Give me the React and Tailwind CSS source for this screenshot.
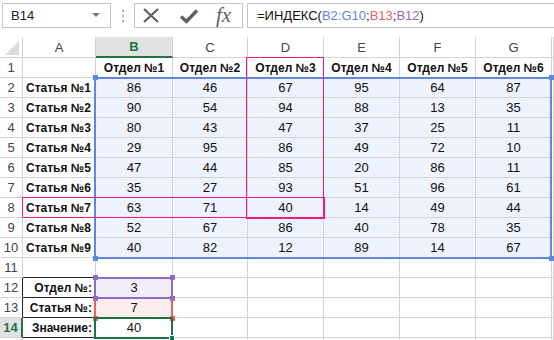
import React from "react";

const data = [
  ["86", "46", "67", "95", "64", "87"],
  ["90", "54", "94", "88", "13", "35"],
  ["80", "43", "47", "37", "25", "11"],
  ["29", "95", "86", "49", "72", "10"],
  ["47", "44", "85", "20", "86", "11"],
  ["35", "27", "93", "51", "96", "61"],
  ["63", "71", "40", "14", "49", "44"],
  ["52", "67", "86", "40", "78", "35"],
  ["40", "82", "12", "89", "14", "67"],
];

const cols = ["A", "B", "C", "D", "E", "F", "G"];
const G = "border-r border-b border-[#d4d4d4]";

function Sq({ cls }) {
  return <div className={"absolute w-[5px] h-[5px] " + cls} />;
}

export default function App() {
  const rows = [];
  rows.push(
    <div key="corner" className={"h-[21px] relative " + G}>
      <svg width="22" height="20" className="absolute left-0 top-0">
        <polygon points="5,18 19,18 19,4" fill="#dadada" />
      </svg>
    </div>
  );
  cols.forEach((c) => {
    if (c === "B") {
      rows.push(
        <div
          key={"h" + c}
          className="h-[21px] flex items-center justify-center bg-[#e1e1e1] border-r border-[#d4d4d4] border-b-2 border-b-[#217346] text-[#217346] font-bold"
        >
          {c}
        </div>
      );
    } else {
      rows.push(
        <div key={"h" + c} className={"h-[21px] flex items-center justify-center text-[#444] " + G}>
          {c}
        </div>
      );
    }
  });
  rows.push(<div key="hx" className={"h-[21px] " + G} />);

  for (let r = 1; r <= 15; r++) {
    if (r === 14) {
      rows.push(
        <div
          key={"r" + r}
          className="h-[20px] flex items-center justify-center bg-[#e1e1e1] text-[#217346] font-bold border-b border-[#d4d4d4] border-r-2 border-r-[#217346]"
        >
          {r}
        </div>
      );
    } else if (r === 12 || r === 13) {
      rows.push(
        <div key={"r" + r} className="h-[20px] flex items-center justify-center text-[#444] border-b border-[#d4d4d4] border-r border-r-[#222]">
          {r}
        </div>
      );
    } else {
      rows.push(
        <div key={"r" + r} className={"h-[20px] flex items-center justify-center text-[#444] " + G}>
          {r === 15 ? "" : r}
        </div>
      );
    }
    let aText = "";
    let aAlign = "justify-start pl-[3px]";
    let aBorder = G;
    if (r >= 2 && r <= 10) aText = "Статья №" + (r - 1);
    if (r === 11) aBorder = "border-r border-[#d4d4d4] border-b border-b-[#222]";
    if (r >= 12 && r <= 14) {
      aText = r === 12 ? "Отдел №:" : r === 13 ? "Статья №:" : "Значение:";
      aAlign = "justify-end pr-[3px]";
      aBorder = "border-r border-b border-[#222]";
    }
    rows.push(
      <div key={"a" + r} className={"h-[20px] flex items-center font-bold text-[12px] text-[#111] whitespace-nowrap overflow-hidden " + aAlign + " " + aBorder}>
        {aText}
      </div>
    );
    for (let c = 0; c < 6; c++) {
      let txt = "";
      let bg = "";
      let bold = "";
      if (r === 1) {
        txt = "Отдел №" + (c + 1);
        bold = "font-bold text-[12px]";
      } else if (r >= 2 && r <= 10) {
        txt = data[r - 2][c];
        bg = "bg-[#eef2fc]";
      } else if (c === 0 && r === 12) {
        txt = "3";
        bg = "bg-[#f1eefa]";
      } else if (c === 0 && r === 13) {
        txt = "7";
        bg = "bg-[#fdeeee]";
      } else if (c === 0 && r === 14) {
        txt = "40";
      }
      rows.push(
        <div
          key={"c" + r + "-" + c}
          className={"h-[20px] flex items-center justify-center text-[#111] whitespace-nowrap " + bold + " " + bg + " " + G}
        >
          {txt}
        </div>
      );
    }
    rows.push(<div key={"x" + r} className={"h-[20px] " + G} />);
  }

  return (
    <div
      className="w-[554px] h-[340px] overflow-hidden bg-white text-[13px] leading-none text-[#222]"
      style={{ fontFamily: '"Liberation Sans", Arial, sans-serif' }}
    >
      <div className="h-[37px] flex items-start pt-[3px] pl-[2px]">
        <div className="w-[109px] h-[25px] border border-[#c6c6c6] flex items-center pl-[8px] text-[#222]">
          <span>B14</span>
          <svg width="8" height="5" className="ml-auto mr-[10px]">
            <polygon points="0,0 8,0 4,4" fill="#777" />
          </svg>
        </div>
        <div className="w-[23px] h-[25px] flex flex-col items-center justify-center gap-[3px]">
          <div className="w-[2px] h-[2px] bg-[#aaa]" />
          <div className="w-[2px] h-[2px] bg-[#aaa]" />
          <div className="w-[2px] h-[2px] bg-[#aaa]" />
        </div>
        <div className="w-[109px] h-[25px] border border-[#c6c6c6] relative flex items-center">
          <svg width="70" height="23" className="absolute left-0 top-0">
            <path d="M9 5 L23 18 M23 5 L9 18" stroke="#5f5f5f" strokeWidth="2.2" fill="none" />
            <path d="M46 12.5 L51.5 17.5 L62 6.5" stroke="#5f5f5f" strokeWidth="3.4" fill="none" strokeLinejoin="miter" />
          </svg>
          <span
            className="absolute left-[81px] top-[1px] text-[21px] italic text-[#5f5f5f]"
            style={{ fontFamily: '"Liberation Serif", "Times New Roman", serif' }}
          >
            fx
          </span>
        </div>
        <div className="ml-[4px] flex-1 h-[25px] border-l border-y border-[#c6c6c6] flex items-center pl-[9px] whitespace-nowrap text-[#111]">
          <span>=ИНДЕКС(</span>
          <span className="text-[#5b87e0]">B2:G10</span>
          <span>;</span>
          <span className="text-[#e8605f]">B13</span>
          <span>;</span>
          <span className="text-[#8c6cc8]">B12</span>
          <span>)</span>
        </div>
      </div>

      <div className="relative">
        <div className="grid grid-cols-[23px_73px_77px_75px_76px_76px_76px_76px_1fr]">{rows}</div>

        <div className="absolute left-[94px] top-[40px] w-[458px] h-[182px] border-2 border-[#5e88e0]" />
        <Sq cls="left-[93px] top-[38px] bg-[#5e88e0]" />
        <Sq cls="left-[549px] top-[38px] bg-[#5e88e0]" />
        <Sq cls="left-[93px] top-[219px] bg-[#5e88e0]" />
        <Sq cls="left-[549px] top-[219px] bg-[#5e88e0]" />

        <div className="absolute left-[246px] top-[20px] w-[78px] h-[161px] border border-[#ec1a82]" />
        <div className="absolute left-[22px] top-[160px] w-[302px] h-[21px] border border-[#ec1a82]" />
        <div className="absolute left-[246px] top-[160px] w-[79px] h-[22px] border-r-2 border-b-2 border-[#ec1a82]" />

        <div className="absolute left-[94px] top-[240px] w-[79px] h-[22px] border-2 border-[#8c6cc8]" />
        <Sq cls="left-[93px] top-[238px] bg-[#8c6cc8]" />
        <Sq cls="left-[170px] top-[238px] bg-[#8c6cc8]" />
        <Sq cls="left-[93px] top-[259px] bg-[#8c6cc8]" />
        <Sq cls="left-[170px] top-[259px] bg-[#8c6cc8]" />

        <div className="absolute left-[94px] top-[262px] w-[79px] h-[19px] border-x-2 border-[#e8605f]" />
        <Sq cls="left-[93px] top-[279px] bg-[#e8605f]" />
        <Sq cls="left-[170px] top-[279px] bg-[#e8605f]" />

        <div className="absolute left-[94px] top-[280px] w-[79px] h-[22px] border-2 border-[#217346]" />
        <div className="absolute left-[169px] top-[298px] w-[6px] h-[6px] bg-[#217346] border border-white" />
      </div>
    </div>
  );
}
